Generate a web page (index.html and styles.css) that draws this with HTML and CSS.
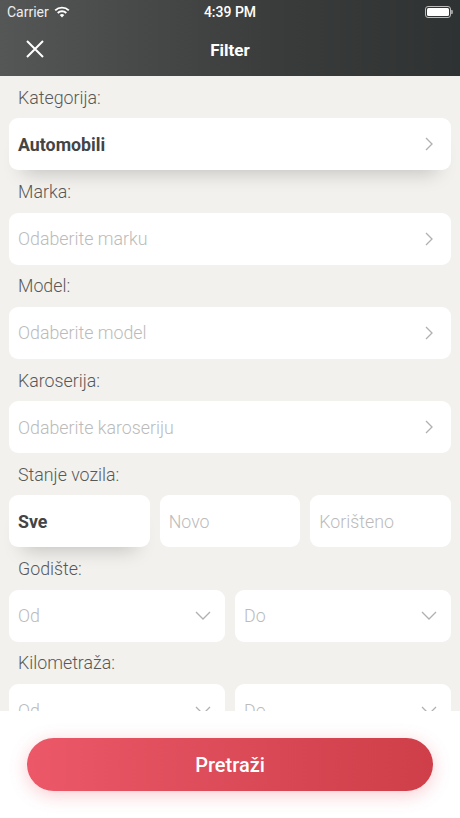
FILE: index.html
```html
<!DOCTYPE html>
<html lang="hr">
<head>
  <meta charset="UTF-8">
  <title>Filter</title>
  <link rel="stylesheet" href="styles.css">
</head>
<body>
  <div class="header">
    <div class="statusbar">
      <div class="carrier">
        Carrier
        <svg class="wifi" width="16" height="12" viewBox="0 0 16 12">
          <path d="M8 11.5 L10.3 9 A3.4 3.4 0 0 0 5.7 9 Z" fill="#fff"/>
          <path d="M3.7 7 A6.2 6.2 0 0 1 12.3 7" stroke="#fff" stroke-width="1.9" fill="none"/>
          <path d="M1.2 4.4 A9.8 9.8 0 0 1 14.8 4.4" stroke="#fff" stroke-width="1.9" fill="none"/>
        </svg>
      </div>
      <div class="time">4:39 PM</div>
      <div class="battery">
        <span class="battery-body"><span class="battery-level"></span></span>
        <span class="battery-tip"></span>
      </div>
    </div>
    <div class="navbar">
      <svg class="close" width="18" height="18" viewBox="0 0 18 18">
        <path d="M1 1 L17 17 M17 1 L1 17" stroke="#fff" stroke-width="2" fill="none"/>
      </svg>
      <div class="title">Filter</div>
    </div>
  </div>

  <div class="content">
    <div class="label">Kategorija:</div>
    <div class="field selected">
      <span>Automobili</span>
      <svg class="chevron" width="8" height="14" viewBox="0 0 8 14"><path d="M1 1 L7 7 L1 13" stroke="#b0b0b0" stroke-width="1.3" fill="none"/></svg>
    </div>

    <div class="label">Marka:</div>
    <div class="field">
      <span class="placeholder">Odaberite marku</span>
      <svg class="chevron" width="8" height="14" viewBox="0 0 8 14"><path d="M1 1 L7 7 L1 13" stroke="#b0b0b0" stroke-width="1.3" fill="none"/></svg>
    </div>

    <div class="label">Model:</div>
    <div class="field">
      <span class="placeholder">Odaberite model</span>
      <svg class="chevron" width="8" height="14" viewBox="0 0 8 14"><path d="M1 1 L7 7 L1 13" stroke="#b0b0b0" stroke-width="1.3" fill="none"/></svg>
    </div>

    <div class="label">Karoserija:</div>
    <div class="field">
      <span class="placeholder">Odaberite karoseriju</span>
      <svg class="chevron" width="8" height="14" viewBox="0 0 8 14"><path d="M1 1 L7 7 L1 13" stroke="#b0b0b0" stroke-width="1.3" fill="none"/></svg>
    </div>

    <div class="label">Stanje vozila:</div>
    <div class="row three">
      <div class="field selected"><span>Sve</span></div>
      <div class="field"><span class="placeholder">Novo</span></div>
      <div class="field"><span class="placeholder">Korišteno</span></div>
    </div>

    <div class="label">Godište:</div>
    <div class="row two">
      <div class="field">
        <span class="placeholder">Od</span>
        <svg class="chevron-down" width="16" height="9" viewBox="0 0 16 9"><path d="M1 1 L8 8 L15 1" stroke="#b0b0b0" stroke-width="1.3" fill="none"/></svg>
      </div>
      <div class="field">
        <span class="placeholder">Do</span>
        <svg class="chevron-down" width="16" height="9" viewBox="0 0 16 9"><path d="M1 1 L8 8 L15 1" stroke="#b0b0b0" stroke-width="1.3" fill="none"/></svg>
      </div>
    </div>

    <div class="label">Kilometraža:</div>
    <div class="row two">
      <div class="field">
        <span class="placeholder">Od</span>
        <svg class="chevron-down" width="16" height="9" viewBox="0 0 16 9"><path d="M1 1 L8 8 L15 1" stroke="#b0b0b0" stroke-width="1.3" fill="none"/></svg>
      </div>
      <div class="field">
        <span class="placeholder">Do</span>
        <svg class="chevron-down" width="16" height="9" viewBox="0 0 16 9"><path d="M1 1 L8 8 L15 1" stroke="#b0b0b0" stroke-width="1.3" fill="none"/></svg>
      </div>
    </div>
  </div>

  <div class="bottom">
    <button class="search">Pretraži</button>
  </div>
</body>
</html>
```

FILE: styles.css
```css
* {
  box-sizing: border-box;
}

body {
  margin: 0;
  width: 460px;
  height: 818px;
  overflow: hidden;
  font-family: Roboto, "Noto Sans", sans-serif;
  background: #f2f1ee;
  display: flex;
  flex-direction: column;
}

.header {
  height: 76px;
  background: linear-gradient(to right, #555656, #3a3c3c 60%, #2f3232);
  color: #fff;
  flex-shrink: 0;
}

.statusbar {
  height: 24px;
  display: flex;
  align-items: center;
  justify-content: space-between;
  padding: 0 7px;
  font-size: 14px;
}

.carrier {
  width: 120px;
  display: flex;
  align-items: center;
  gap: 5px;
  color: #eee;
}

.time {
  font-weight: 500;
  font-size: 14px;
}

.battery {
  width: 120px;
  display: flex;
  align-items: center;
  justify-content: flex-end;
}

.battery-body {
  width: 26px;
  height: 12px;
  border: 1px solid #bbb;
  border-radius: 3px;
  padding: 1px;
  display: flex;
}

.battery-level {
  flex: 1;
  background: #fff;
  border-radius: 1.5px;
}

.battery-tip {
  width: 2px;
  height: 4px;
  background: #999;
  border-radius: 0 1px 1px 0;
}

.navbar {
  height: 52px;
  display: flex;
  align-items: center;
  justify-content: center;
  position: relative;
}

.close {
  position: absolute;
  left: 26px;
  top: 16px;
}

.title {
  font-size: 17px;
  font-weight: 700;
}

.content {
  flex: 1;
  padding: 0 9px;
  overflow: hidden;
}

.label {
  height: 42.3px;
  display: flex;
  align-items: center;
  padding-left: 9px;
  font-size: 17.8px;
  font-weight: 300;
  color: #585858;
}

.field {
  height: 52px;
  background: #fff;
  border-radius: 9px;
  display: flex;
  align-items: center;
  justify-content: space-between;
  padding: 0 18px 0 9px;
  font-size: 17.8px;
  color: #444;
}

.field.selected {
  font-weight: 700;
  box-shadow: 0 16px 20px -14px rgba(0, 0, 0, 0.22);
  position: relative;
  z-index: 1;
}

.placeholder {
  font-weight: 300;
  color: #bbb;
}

.row {
  display: grid;
  gap: 10px;
}

.row.three {
  grid-template-columns: 1fr 1fr 1fr;
}

.row.two {
  grid-template-columns: 1fr 1fr;
}

.row .field {
  padding-right: 14px;
}

.bottom {
  height: 107px;
  flex-shrink: 0;
  background: #fff;
  padding: 27px 27px 0;
}

.search {
  width: 100%;
  height: 53px;
  border: none;
  border-radius: 27px;
  background: linear-gradient(to right, #ec5868, #d54652 70%, #cf3f49);
  color: #fff;
  font-family: Roboto, "Noto Sans", sans-serif;
  font-size: 20px;
  font-weight: 500;
  box-shadow: 0 4px 18px rgba(236, 87, 102, 0.3);
}
```
